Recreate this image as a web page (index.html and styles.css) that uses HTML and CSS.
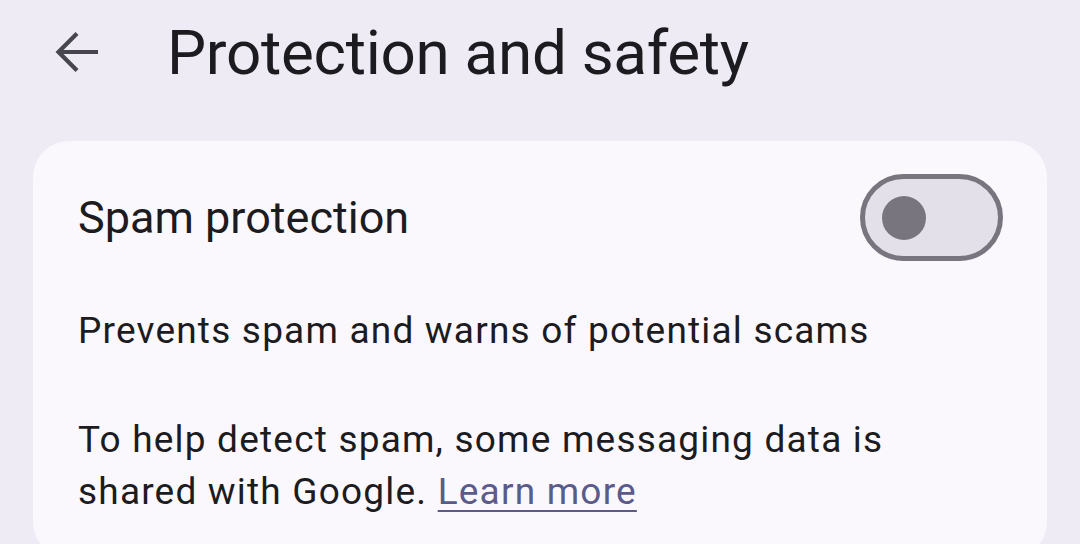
FILE: index.html
```html
<!DOCTYPE html>
<html lang="en">
<head>
    <meta charset="UTF-8">
    <meta name="viewport" content="width=device-width, initial-scale=1.0">
    <title>Protection and safety</title>
    <link rel="stylesheet" href="styles.css">
</head>
<body>
    <div class="top-bar">
        <a href="#" class="back-button" aria-label="Back">
            <svg width="48" height="48" viewBox="0 0 48 48">
                <path d="M45 24H6M24 5.5L5.5 24L24 42.5" fill="none" stroke="#47464F" stroke-width="4.2"/>
            </svg>
        </a>
        <h1 class="title">Protection and safety</h1>
    </div>

    <div class="settings-card">
        <div class="setting-row">
            <div class="setting-label">Spam protection</div>
            <div class="switch">
                <div class="switch-knob"></div>
            </div>
        </div>
        <p class="setting-text">Prevents spam and warns of potential scams</p>
        <p class="setting-text note">To help detect spam, some messaging data is shared with Google. <a href="#">Learn more</a></p>
    </div>
</body>
</html>
```

FILE: styles.css
```css
body {
    font-family: Roboto, "Noto Sans", sans-serif;
    margin: 0;
    background-color: #EEEBF4;
    color: #1C1B20;
    height: 544px;
    overflow: hidden;
}

.top-bar {
    display: flex;
    align-items: center;
    height: 104px;
    padding-left: 53px;
}

.back-button {
    display: flex;
    width: 48px;
    height: 48px;
}

.title {
    margin: 0 0 0 66px;
    font-size: 62px;
    font-weight: 400;
    letter-spacing: -0.3px;
}

.settings-card {
    margin: 37px 33px 0 33px;
    padding: 33px 44px 40px 45px;
    background-color: #FAF8FD;
    border-radius: 36px;
}

.setting-row {
    display: flex;
    align-items: center;
    justify-content: space-between;
}

.setting-label {
    font-size: 45px;
}

.switch {
    box-sizing: border-box;
    width: 143px;
    height: 87px;
    border: 5px solid #79757F;
    border-radius: 44px;
    background-color: #E4E0E9;
    display: flex;
    align-items: center;
    padding-left: 17px;
}

.switch-knob {
    width: 44px;
    height: 44px;
    border-radius: 50%;
    background-color: #79757F;
}

.setting-text {
    margin: 44px 0 0 0;
    max-width: 850px;
    font-size: 37px;
    line-height: 52px;
    letter-spacing: 1.2px;
}

.setting-text.note {
    margin-top: 57px;
}

.setting-text a {
    color: #5B5A8B;
    text-decoration: underline;
    text-underline-offset: 6px;
    text-decoration-thickness: 2px;
}
```
